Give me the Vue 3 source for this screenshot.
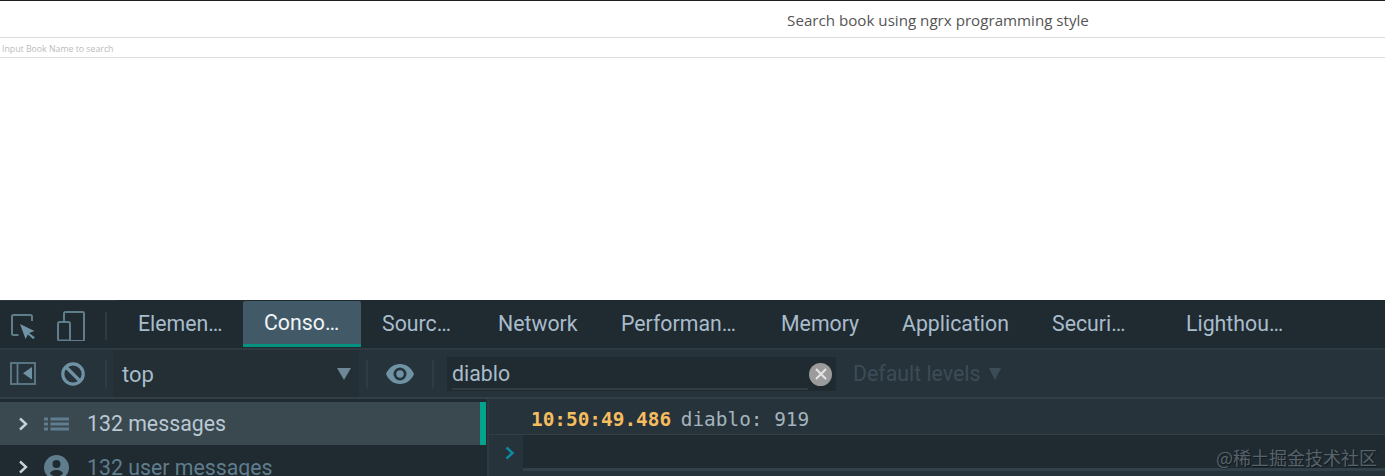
<script setup>
const tabs = [
  { label: 'Elemen…', w: 126 },
  { label: 'Conso…', w: 118, active: true },
  { label: 'Sourc…', w: 116 },
  { label: 'Network', w: 123 },
  { label: 'Performan…', w: 160 },
  { label: 'Memory', w: 121 },
  { label: 'Application', w: 150 },
  { label: 'Securi…', w: 134 },
  { label: 'Lighthou…', w: 136 },
]
</script>

<template>
  <div class="page">
    <header class="title">Search book using ngrx programming style</header>
    <div class="search">Input Book Name to search</div>
    <div class="blank"></div>
    <section class="devtools">
      <div class="tabbar">
        <div class="tools">
          <svg class="ic" width="26" height="26" viewBox="0 0 26 26" fill="none">
            <path d="M7.500 22H2.500a1.500 1.500 0 0 1-1.500-1.500V3.500A1.500 1.500 0 0 1 2.500 2h17A1.500 1.500 0 0 1 21 3.500V8" stroke="#5f7d8c" stroke-width="2" />
            <path d="M9 11l14.500 7-5.300 2 5.800 4.500-2 1.500-5-4.500-2.500 4.500z" fill="#6f93a5" />
          </svg>
          <svg class="dev" width="28" height="30" viewBox="0 0 28 30" fill="none" stroke="#5f7d8c" stroke-width="2">
            <path d="M7 10V2.500C7 1.700 7.700 1 8.500 1h17c.8 0 1.500.7 1.500 1.500v26c0 .8-.7 1.500-1.500 1.500H13" />
            <rect x="1" y="11" width="12" height="18.500" rx="1.500" />
          </svg>
          <span class="sep"></span>
        </div>
        <div
          v-for="t in tabs"
          :key="t.label"
          class="tab"
          :class="{ active: t.active }"
          :style="{ width: t.w + 'px' }"
        >{{ t.label }}</div>
      </div>
      <div class="toolbar">
        <svg class="side" width="26" height="23" viewBox="0 0 26 23" fill="none">
          <rect x="1" y="1" width="24" height="21" stroke="#5f7d8c" stroke-width="1.800" />
          <path d="M7.500 1v21" stroke="#5f7d8c" stroke-width="1.800" />
          <path d="M22 5v12.500l-9-6.200z" fill="#6f93a5" />
        </svg>
        <svg class="block" width="24" height="24" viewBox="0 0 24 24" fill="none" stroke="#6f93a5" stroke-width="3.200">
          <circle cx="12" cy="12" r="10.200" />
          <path d="M5 5l14 14" />
        </svg>
        <span class="sep2"></span>
        <div class="context">
          <span>top</span>
          <i class="tri"></i>
        </div>
        <span class="sep3"></span>
        <svg class="eye" width="28" height="20" viewBox="0 0 28 20">
          <path fill-rule="evenodd" fill="#6f93a5" d="M14 0c6.400 0 11.600 4 14 10-2.400 6-7.600 10-14 10S2.400 16 0 10C2.400 4 7.600 0 14 0zm0 3.500a6.500 6.500 0 1 0 0 13 6.500 6.500 0 0 0 0-13zm0 2.800a3.700 3.700 0 1 1 0 7.400 3.700 3.700 0 0 1 0-7.400z" />
        </svg>
        <span class="sep4"></span>
        <div class="filter">
          <div class="field">diablo</div>
          <span class="clear">
            <svg width="14" height="14" viewBox="0 0 14 14" stroke="#e4e4e4" stroke-width="2">
              <path d="M2 2l10 10M12 2L2 12" />
            </svg>
          </span>
        </div>
        <div class="levels">Default levels <i class="tri small"></i></div>
      </div>
      <div class="body">
        <aside class="sidebar">
          <div class="row selected">
            <svg class="chev" width="11" height="14" viewBox="0 0 11 14" fill="none" stroke="#c7d2d8" stroke-width="2.400">
              <path d="M2 1.500L8 7l-6 5.500" />
            </svg>
            <svg class="list" width="25" height="14" viewBox="0 0 25 14" fill="#5f7d8c">
              <path d="M0 .5h4v3H0zM6.500.5H25v3H6.500zM0 5.500h4v3H0zM6.500 5.500H25v3H6.500zM0 10.500h4v3H0zM6.500 10.500H25v3H6.500z" />
            </svg>
            <span class="count">132 messages</span>
          </div>
          <div class="row user">
            <svg class="chev" width="11" height="14" viewBox="0 0 11 14" fill="none" stroke="#c7d2d8" stroke-width="2.400">
              <path d="M2 1.500L8 7l-6 5.500" />
            </svg>
            <svg class="person" width="25" height="25" viewBox="0 0 25 25" fill="#5f7d8c">
              <path fill-rule="evenodd" d="M12.500 0a12.500 12.500 0 1 1 0 25 12.500 12.500 0 0 1 0-25zm0 5a4 4 0 1 0 0 8 4 4 0 0 0 0-8zm0 10c-3 0-6 1.300-6.500 3.500 1.500 1.800 3.800 3 6.500 3s5-1.200 6.500-3c-.5-2.200-3.500-3.500-6.500-3.500z" />
            </svg>
            <span class="count dim">132 user messages</span>
          </div>
        </aside>
        <main class="console">
          <div class="log"><span class="time">10:50:49.486</span> diablo: 919</div>
          <div class="prompt">
            <div class="gutter">
              <svg width="10" height="14" viewBox="0 0 10 14" fill="none" stroke="#0e8ba3" stroke-width="2.400">
                <path d="M1.500 1.500L7.500 7l-6 5.500" />
              </svg>
            </div>
            <div class="input"></div>
          </div>
        </main>
      </div>
      <div class="mark">@稀土掘金技术社区</div>
    </section>
  </div>
</template>

<style>
html, body { margin: 0; background: #fff; overflow: hidden; }
</style>

<style scoped>
.page {
  width: 1385px;
  height: 476px;
  display: flex;
  flex-direction: column;
  overflow: hidden;
  background: #fff;
  font-family: "Open Sans", "Noto Sans", sans-serif;
}
.title {
  height: 36px;
  border-top: 1px solid #1f1f1f;
  border-bottom: 1px solid #dcdcdc;
  text-align: center;
  line-height: 39px;
  padding-left: 491px;
  font-size: 15.150px;
  color: #555;
}
.search {
  height: 19px;
  border-bottom: 1px solid #dcdcdc;
  padding-left: 2px;
  font-size: 8.750px;
  line-height: 22px;
  color: #bbb;
}
.blank { height: 242px; }
.devtools {
  position: relative;
  flex: 1;
  background: #202a31;
  font-family: Roboto, sans-serif;
  overflow: hidden;
}
.tabbar {
  height: 48px;
  display: flex;
  border-bottom: 2px solid #2d3a42;
}
.tools {
  width: 117px;
  height: 47px;
  display: flex;
  align-items: center;
  border-top: 1px solid #2d3a42;
}
.ic { margin-left: 11px; margin-top: 3px; }
.dev { margin-left: 20px; margin-top: 2px; }
.sep { width: 2px; height: 28px; background: #2d3a42; margin-left: 20px; margin-top: 2px; }
.tab {
  font-size: 21.300px;
  color: #a8bccb;
  line-height: 48px;
  padding-left: 21px;
  box-sizing: border-box;
  white-space: nowrap;
}
.tab.active {
  height: 46px;
  margin-top: 1px;
  background: #425a68;
  color: #f0f4f6;
  border-bottom: 3px solid #03917f;
  line-height: 43px;
  border-radius: 2px 2px 0 0;
}
.toolbar {
  height: 47px;
  background: #27333a;
  display: flex;
  align-items: center;
  border-bottom: 2px solid #333f47;
}
.side { margin-left: 10px; }
.block { margin-left: 25px; }
.sep2 { width: 2px; height: 28px; background: #2f3c44; margin-left: 20px; }
.context {
  width: 246px;
  height: 47px;
  margin-left: 6px;
  background: #232e35;
  display: flex;
  align-items: center;
  justify-content: space-between;
  padding: 2px 8px 0 9px;
  box-sizing: border-box;
  font-size: 22px;
  color: #a8bccb;
}
.tri {
  width: 0;
  height: 0;
  border-left: 7px solid transparent;
  border-right: 7px solid transparent;
  border-top: 12px solid #6f8896;
}
.context .tri { margin-top: -2px; }
.sep3 { width: 2px; height: 28px; background: #2f3c44; margin-left: 7px; }
.eye { margin-left: 18px; }
.sep4 { width: 2px; height: 28px; background: #2f3c44; margin-left: 18px; }
.filter {
  width: 389px;
  height: 34px;
  margin-left: 13px;
  background: #202a31;
  display: flex;
  align-items: center;
  position: relative;
  padding-left: 5px;
  box-sizing: border-box;
}
.field {
  width: 356px;
  height: 30px;
  border-bottom: 2px solid #2f3c44;
  font-size: 21.300px;
  line-height: 32px;
  color: #a8bccb;
}
.clear {
  position: absolute;
  right: 4px;
  top: 6px;
  width: 23px;
  height: 23px;
  border-radius: 50%;
  background: #9b9b9b;
  display: flex;
  align-items: center;
  justify-content: center;
}
.levels {
  margin-left: 17px;
  font-size: 21.300px;
  color: #3c4c57;
  display: flex;
  align-items: center;
  gap: 9px;
}
.tri.small {
  border-left-width: 6.500px;
  border-right-width: 6.500px;
  border-top-width: 12px;
  border-top-color: #3c4c57;
}
.body {
  display: flex;
  height: 77px;
}
.sidebar {
  width: 487px;
  padding-top: 3px;
  border-right: 2px solid #2d3a42;
}
.row {
  height: 43px;
  display: flex;
  align-items: center;
  font-size: 21.300px;
}
.row.selected {
  background: #3a4850;
  width: 486px;
  box-sizing: border-box;
  border-right: 6px solid #03a38d;
}
.row.user { height: 44px; }
.chev { margin-left: 18px; }
.list { margin-left: 15px; }
.person { margin-left: 15px; }
.count { margin-left: 18px; color: #b9c9d3; }
.count.dim { color: #5f7d8c; }
.console {
  flex: 1;
  background: #27333a;
  display: flex;
  flex-direction: column;
}
.log {
  height: 35px;
  border-bottom: 1px solid #333f47;
  padding-left: 42px;
  font-family: "DejaVu Sans Mono", monospace;
  font-size: 19.400px;
  line-height: 42px;
  color: #a4b3bd;
  white-space: pre;
}
.time { color: #f5bd5f; font-weight: 700; margin-right: -2px; }
.prompt { display: flex; height: 36px; }
.gutter {
  width: 34px;
  padding-left: 16px;
  box-sizing: border-box;
  padding-top: 10px;
}
.input {
  flex: 1;
  height: 33px;
  background: #202a31;
  border-bottom: 3px solid #324149;
}
.mark {
  position: absolute;
  right: 8px;
  bottom: 8px;
  font-family: "Noto Sans CJK SC", sans-serif;
  font-size: 18px;
  line-height: 22px;
  color: #56636b;
  text-shadow: 1px 1px 1px rgba(0, 0, 0, 0.4);
}
</style>
